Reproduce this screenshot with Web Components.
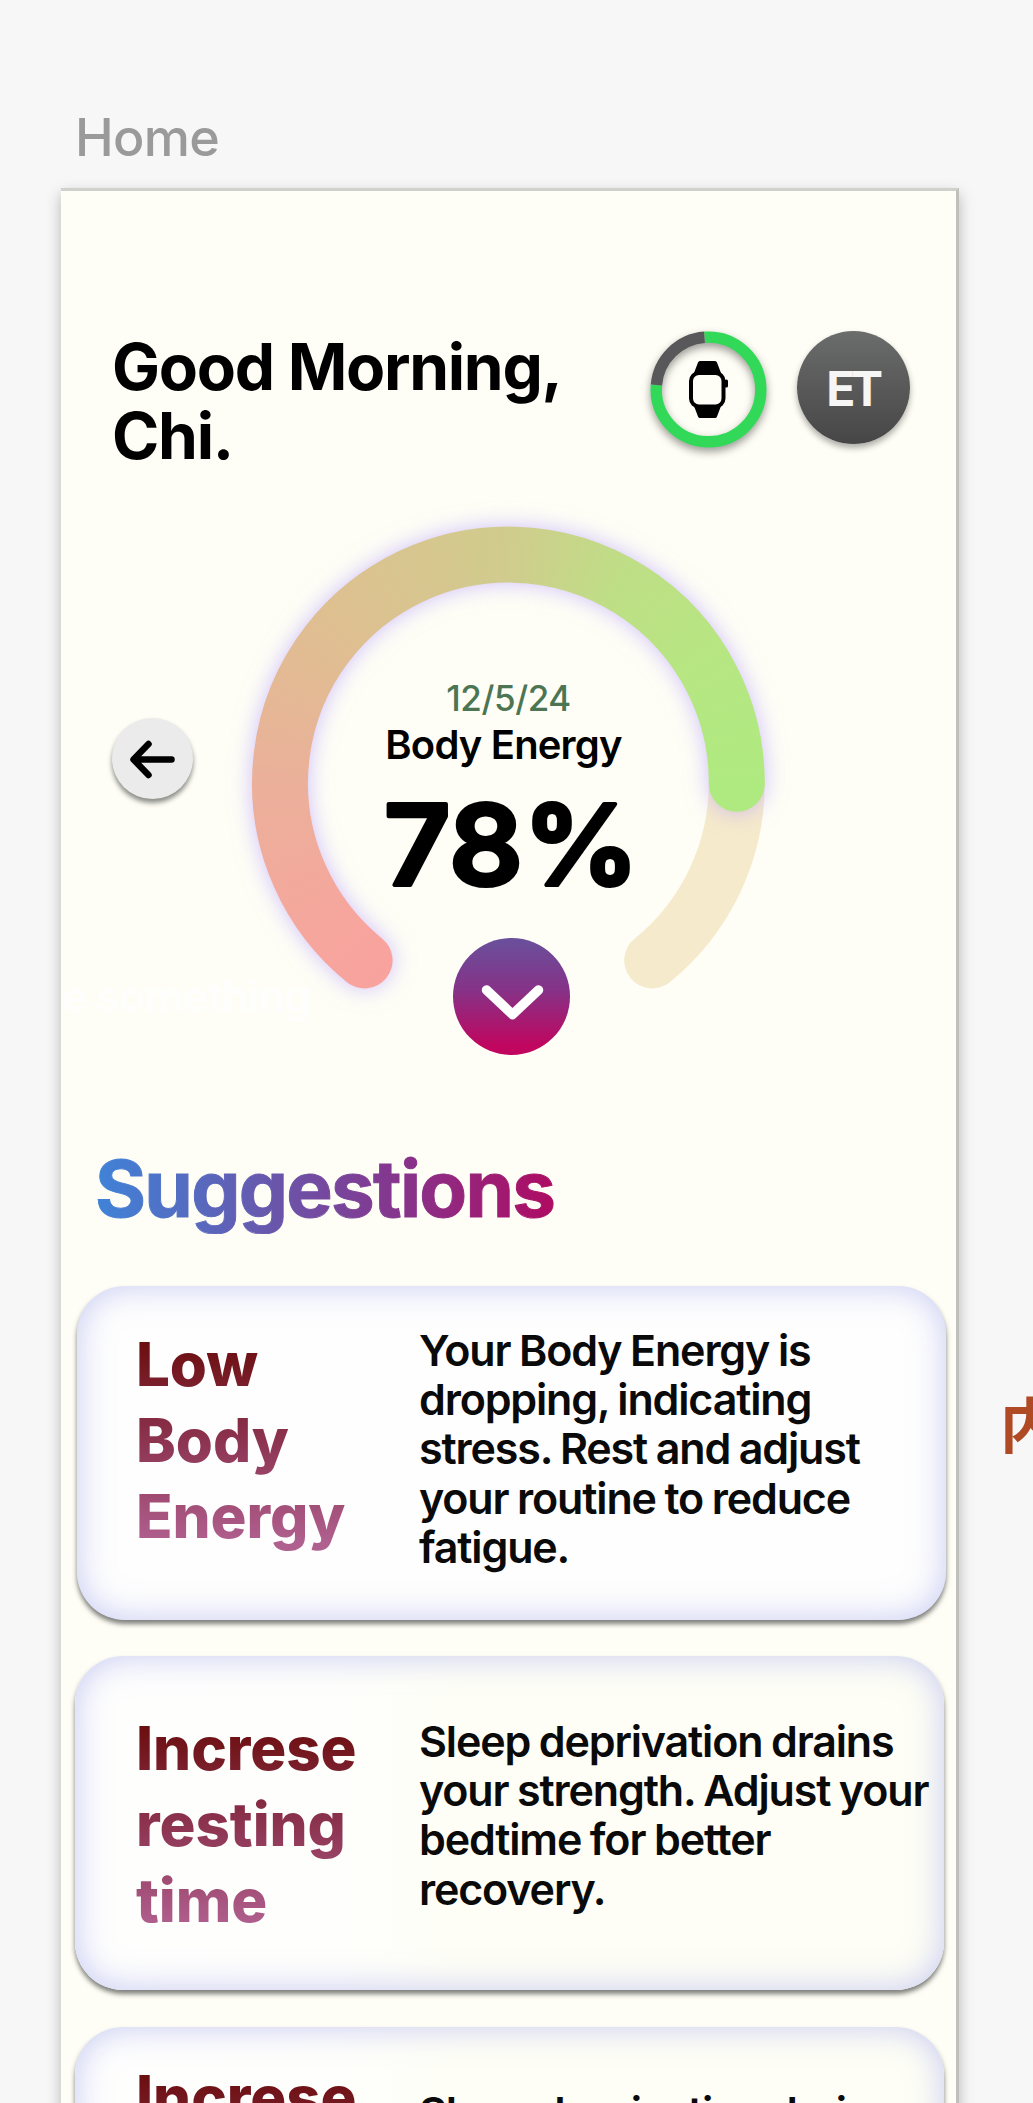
<!DOCTYPE html>
<html lang="en">
<head>
<meta charset="utf-8">
<title>Home</title>
<style>
    html, body {
        margin: 0;
        height: 2103px;
        overflow: hidden;
        background: #f7f7f7;
        font-family: Inter, "Liberation Sans", sans-serif;
    }
</style>
</head>
<body>
<design-canvas>
    <span slot="label">Home</span>
    <phone-frame>
        <greeting-bar>
            Good Morning,<br>Chi.
            <watch-ring slot="actions"></watch-ring>
            <user-avatar slot="actions">ET</user-avatar>
        </greeting-bar>
        <energy-section>
            <back-button slot="nav"></back-button>
            <energy-gauge date="12/5/24" value="78%">Body Energy</energy-gauge>
        </energy-section>
        <section-title>Suggestions</section-title>
        <suggestion-card class="first">
            <span slot="title">Low<br>Body<br>Energy</span>
            Your Body Energy is<br>dropping, indicating<br>stress. Rest and adjust<br>your routine to reduce<br>fatigue.
        </suggestion-card>
        <suggestion-card class="second">
            <span slot="title">Increse<br>resting<br>time</span>
            Sleep deprivation drains<br>your strength. Adjust your<br>bedtime for better<br>recovery.
        </suggestion-card>
        <suggestion-card class="third">
            <span slot="title">Increse<br>resting<br>time</span>
            Sleep deprivation drains<br>your strength. Adjust your<br>bedtime for better<br>recovery.
        </suggestion-card>
        <span slot="ghost">e something</span>
    </phone-frame>
    <canvas-note slot="notes">内</canvas-note>
</design-canvas>

<script>
class BaseElement extends HTMLElement {

    constructor() {
        super();
        this.attachShadow({ mode: 'open' });
    }

    connectedCallback() {
        this.shadowRoot.innerHTML = this.render();
    }
}

/** grey artboard area with the frame name above the frame */
class DesignCanvas extends BaseElement {
    render() {
        return `
        <style>
            :host {
                display: block;
                position: relative;
                width: 1033px;
                height: 2103px;
                overflow: hidden;
            }

            .label {
                padding: 108px 0 20px 75px;
                font-size: 52px;
                font-weight: 500;
                line-height: 60px;
                letter-spacing: -0.013em;
                color: #9a9a9a;
            }
        </style>
        <div class="label"><slot name="label"></slot></div>
        <slot></slot>
        <slot name="notes"></slot>`;
    }
}

class PhoneFrame extends BaseElement {
    render() {
        return `
        <style>
            :host {
                display: block;
                position: relative;
                box-sizing: border-box;
                width: 898px;
                height: 2000px;
                margin-left: 61px;
                border-top: 3px solid #d0d0cc;
                border-right: 3px solid #bfbfbb;
                background: #fefef6;
                box-shadow: 0 6px 14px rgba(0, 0, 0, 0.26);
            }

            .ghost {
                position: absolute;
                left: 1px;
                top: 779px;
                font-size: 44px;
                font-weight: 700;
                line-height: 52px;
                letter-spacing: -0.035em;
                color: #fefefd;
            }
        </style>
        <div class="ghost"><slot name="ghost"></slot></div>
        <slot></slot>`;
    }
}

class GreetingBar extends BaseElement {
    render() {
        return `
        <style>
            :host {
                display: flex;
                align-items: flex-start;
                height: 139px;
                padding: 140px 46px 0 51px;
            }

            h1 {
                flex: 1;
                margin: 2px 0 0;
                font-size: 64px;
                font-weight: 700;
                line-height: 68.700px;
                letter-spacing: -0.02em;
                white-space: nowrap;
                color: #000;
            }

            .actions {
                display: flex;
                gap: 30px;
            }
        </style>
        <h1><slot></slot></h1>
        <div class="actions"><slot name="actions"></slot></div>`;
    }
}

class WatchRing extends BaseElement {
    render() {
        return `
        <style>
            :host {
                display: block;
                width: 117px;
                height: 117px;
            }

            svg {
                display: block;
                overflow: visible;
            }

            .ring {
                filter: drop-shadow(0 4px 4px rgba(0, 0, 0, 0.4));
            }
        </style>
        <svg width="117" height="117" viewBox="0 0 117 117">
            <g class="ring" fill="none" stroke-width="11.400">
                <path d="M54.500 6.300 A52.300 52.300 0 1 1 6.400 54" stroke="#32d959"/>
                <path d="M6.400 54 A52.300 52.300 0 0 1 54.500 6.300" stroke="#58585a"/>
            </g>
            <path d="M44 42 L48 31.500 Q48.500 30 50 30 H65 Q66.500 30 67 31.500 L71 42 Z M44 75 L48 85.500 Q48.500 87 50 87 H65 Q66.500 87 67 85.500 L71 75 Z"/>
            <rect x="41" y="42" width="32.500" height="33.500" rx="8" fill="#fefef6" stroke="#000" stroke-width="4"/>
            <rect x="74.500" y="48.500" width="3.500" height="8" rx="1.500"/>
        </svg>`;
    }
}

class UserAvatar extends BaseElement {
    render() {
        return `
        <style>
            :host {
                display: flex;
                align-items: center;
                justify-content: center;
                width: 113px;
                height: 113px;
                border-radius: 50%;
                background: linear-gradient(#6b6c6c, #474646);
                box-shadow: 0 4px 6px rgba(0, 0, 0, 0.32);
            }

            span {
                margin: 1px 2px 0 0;
                font-size: 48px;
                font-weight: 700;
                letter-spacing: -0.09em;
                color: #f6f6f6;
            }
        </style>
        <span><slot></slot></span>`;
    }
}

class EnergySection extends BaseElement {
    render() {
        return `
        <style>
            :host {
                display: flex;
                align-items: flex-start;
                gap: 39px;
                height: 593px;
                padding: 37px 0 0 51px;
            }

            .nav {
                padding-top: 211px;
            }
        </style>
        <div class="nav"><slot name="nav"></slot></div>
        <slot></slot>`;
    }
}

class BackButton extends BaseElement {
    render() {
        return `
        <style>
            :host {
                display: flex;
                align-items: center;
                justify-content: center;
                width: 81px;
                height: 81px;
                border-radius: 50%;
                background: #ebebeb;
                box-shadow: 0 4px 5px rgba(0, 0, 0, 0.45);
            }
        </style>
        <svg width="50" height="50" viewBox="0 0 50 50" fill="none" stroke="#000" stroke-width="6.500" stroke-linecap="round" stroke-linejoin="round">
            <path d="M43.500 25.500 H6 M20.500 10 L5.500 25.500 L20.500 41"/>
        </svg>`;
    }
}

/** open ring with the day's score and the expand button in its gap */
class EnergyGauge extends BaseElement {
    render() {
        return `
        <style>
            :host {
                display: grid;
                width: 553px;
                height: 553px;
            }

            .arc, .info {
                grid-area: 1 / 1;
            }

            svg {
                display: block;
                overflow: visible;
            }

            .progress {
                filter: drop-shadow(0 0 11px rgba(176, 150, 255, 0.6));
            }

            .sweep {
                width: 553px;
                height: 553px;
                background: conic-gradient(from 200deg at 276.400px 275.800px,
                    #f9a29e 12deg, #f6a69d 32deg, #ebb09a 70deg, #dfbf91 111deg, #d0cc8d 160deg,
                    #bfde86 188deg, #b7e682 217deg, #afea80 250deg, #afea80 300deg, #f9a29e 300deg);
            }

            .info {
                display: flex;
                flex-direction: column;
                align-items: center;
                padding-top: 170px;
                white-space: nowrap;
            }

            .date {
                margin-bottom: 2px;
                font-size: 35px;
                font-weight: 500;
                line-height: 42px;
                letter-spacing: -0.012em;
                color: #4c7553;
            }

            .name {
                margin-right: 10px;
                font-size: 40px;
                font-weight: 600;
                line-height: 48px;
                letter-spacing: -0.021em;
                color: #000;
            }

            button {
                display: flex;
                align-items: center;
                justify-content: center;
                width: 117px;
                height: 117px;
                margin-left: 6px;
                padding: 0;
                border: 0;
                border-radius: 50%;
                background: linear-gradient(#69509c, #863287 45%, #c0065f 92%);
            }
        </style>
        <svg class="arc" width="553" height="553" viewBox="0 0 553 553" fill="none" stroke-width="56" stroke-linecap="round">
            <defs>
                <mask id="band" maskUnits="userSpaceOnUse" x="0" y="0" width="553" height="553">
                    <path d="M132.600 453.400 A228.400 228.400 0 1 1 504.800 276.800" stroke="#fff"/>
                </mask>
            </defs>
            <path d="M504.800 275.800 A228.400 228.400 0 0 1 420.200 453.400" stroke="#f5eacb"/>
            <g class="progress">
                <g mask="url(#band)">
                    <foreignObject width="553" height="553"><div class="sweep"></div></foreignObject>
                </g>
            </g>
        </svg>
        <div class="info">
            <div class="date">${this.getAttribute('date')}</div>
            <div class="name"><slot></slot></div>
            <svg width="245" height="169" viewBox="0 0 245 169">
                <text x="-2" y="115.500" font-size="111" font-weight="600" textLength="255" lengthAdjust="spacingAndGlyphs" stroke="#000" stroke-width="4" stroke-linejoin="round">${this.getAttribute('value')}</text>
            </svg>
            <button aria-label="Expand">
                <svg width="70" height="50" viewBox="0 0 70 50" fill="none" stroke="#fff" stroke-width="9.500" stroke-linecap="round" stroke-linejoin="round">
                    <path d="M9.500 18 L35.500 42.500 L61.500 18"/>
                </svg>
            </button>
        </div>`;
    }
}

class SectionTitle extends BaseElement {
    render() {
        return `
        <style>
            :host {
                display: block;
                margin: 44px 0 52px 34px;
            }

            h2 {
                width: max-content;
                margin: 0;
                font-size: 78px;
                font-weight: 700;
                line-height: 90px;
                letter-spacing: -0.022em;
                background: linear-gradient(90deg, #3f83d8, #6a55aa 40%, #88328a 68%, #ae0c62);
                -webkit-background-clip: text;
                background-clip: text;
                -webkit-text-stroke: 1px transparent;
                color: transparent;
            }
        </style>
        <h2><slot></slot></h2>`;
    }
}

class SuggestionCard extends BaseElement {
    render() {
        return `
        <style>
            :host {
                display: grid;
                grid-template-columns: 283px 1fr;
                align-items: start;
                box-sizing: border-box;
                width: 869px;
                height: 334px;
                margin: 0 0 36px 14px;
                padding-left: 61px;
                border-radius: 48px;
                background: linear-gradient(90deg, #fefefe, #fefefc 30%, #fefef6 45%);
                box-shadow: 0 4px 5px rgba(0, 0, 0, 0.5), inset 0 0 34px rgba(172, 178, 238, 0.68);
                --title-top: 54px;
                --text-top: 61px;
            }

            :host(.first) {
                margin-left: 16px;
                padding-left: 59px;
                background: #fefefe;
                --title-top: 40px;
                --text-top: 40px;
            }

            :host(.second) {
                margin-bottom: 37px;
            }

            :host(.third) {
                --title-top: 32px;
            }

            h3 {
                width: max-content;
                margin: var(--title-top) 0 0;
                font-size: 60px;
                font-weight: 800;
                line-height: 76px;
                letter-spacing: -0.001em;
                background: linear-gradient(#6c0f10 8%, #8c3350 50%, #b0608f 95%);
                -webkit-background-clip: text;
                background-clip: text;
                color: transparent;
            }

            p {
                margin: var(--text-top) 0 0;
                font-size: 43px;
                font-weight: 560;
                line-height: 49.200px;
                letter-spacing: -0.027em;
                word-spacing: -1px;
                white-space: nowrap;
                color: #0a0a0a;
            }
        </style>
        <h3><slot name="title"></slot></h3>
        <p><slot></slot></p>`;
    }
}

/** free note lying on the canvas, cut off by the window */
class CanvasNote extends BaseElement {
    render() {
        return `
        <style>
            :host {
                position: absolute;
                left: 1000px;
                top: 1376px;
                font: 700 60px/92px "Noto Sans CJK SC", sans-serif;
                color: #b04a25;
            }
        </style>
        <slot></slot>`;
    }
}

customElements.define('design-canvas', DesignCanvas);
customElements.define('phone-frame', PhoneFrame);
customElements.define('greeting-bar', GreetingBar);
customElements.define('watch-ring', WatchRing);
customElements.define('user-avatar', UserAvatar);
customElements.define('energy-section', EnergySection);
customElements.define('back-button', BackButton);
customElements.define('energy-gauge', EnergyGauge);
customElements.define('section-title', SectionTitle);
customElements.define('suggestion-card', SuggestionCard);
customElements.define('canvas-note', CanvasNote);
</script>
</body>
</html>
